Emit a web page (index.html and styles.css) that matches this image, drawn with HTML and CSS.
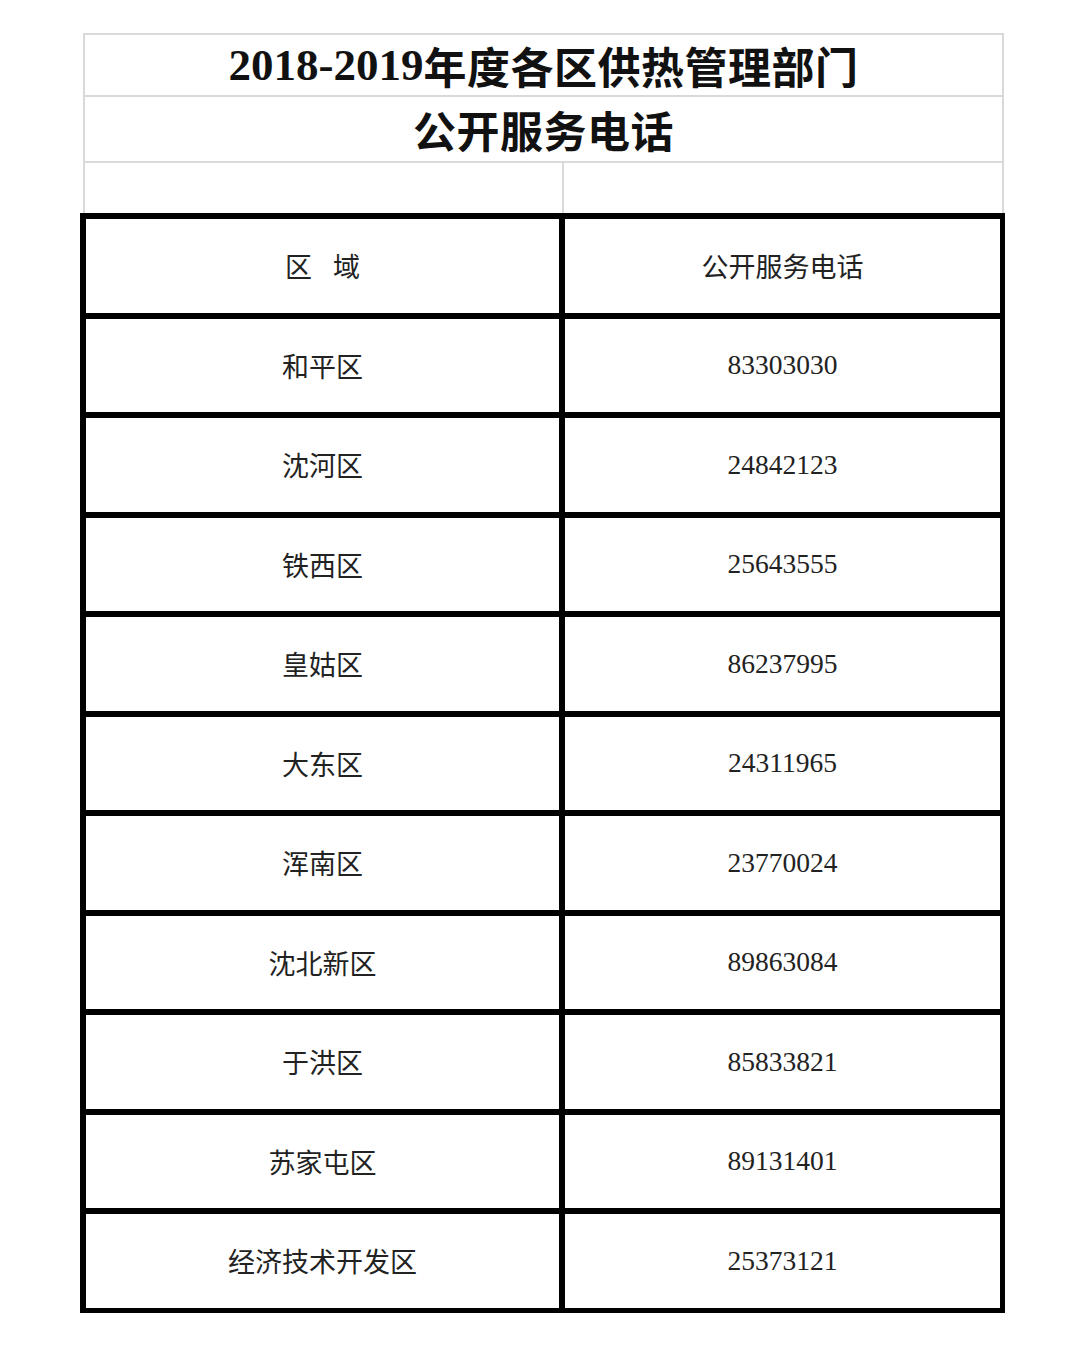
FILE: index.html
```html
<!DOCTYPE html>
<html lang="zh-CN">
<head>
<meta charset="utf-8">
<title>2018-2019年度各区供热管理部门公开服务电话</title>
<link rel="stylesheet" href="styles.css">
</head>
<body>
<div class="page">
  <div class="frame">
    <div class="title-row t1"><span class="num">2018-2019</span>年度各区供热管理部门</div>
    <div class="title-row t2">公开服务电话</div>
    <div class="blank-row"><div class="blank-cell"></div><div class="blank-cell"></div></div>
  </div>
  <div class="grid">
    <div class="cell split"><span>区</span><span>域</span></div><div class="cell">公开服务电话</div>
    <div class="cell">和平区</div><div class="cell tel">83303030</div>
    <div class="cell">沈河区</div><div class="cell tel">24842123</div>
    <div class="cell">铁西区</div><div class="cell tel">25643555</div>
    <div class="cell">皇姑区</div><div class="cell tel">86237995</div>
    <div class="cell">大东区</div><div class="cell tel">24311965</div>
    <div class="cell">浑南区</div><div class="cell tel">23770024</div>
    <div class="cell">沈北新区</div><div class="cell tel">89863084</div>
    <div class="cell">于洪区</div><div class="cell tel">85833821</div>
    <div class="cell">苏家屯区</div><div class="cell tel">89131401</div>
    <div class="cell">经济技术开发区</div><div class="cell tel">25373121</div>
  </div>
</div>
</body>
</html>
```
FILE: styles.css
```css
html, body {
  margin: 0;
  padding: 0;
  background: #ffffff;
}
.page {
  padding-top: 33px;
  font-family: "Noto Sans CJK SC", "Noto Sans", sans-serif;
  color: #1e1e1e;
}
.frame {
  margin-left: 83px;
  width: 921px;
  box-sizing: border-box;
  border: 2px solid #d9d9d9;
  border-bottom: none;
}
.title-row {
  display: flex;
  align-items: center;
  justify-content: center;
  box-sizing: border-box;
  border-bottom: 2px solid #d9d9d9;
  font-weight: 700;
  font-size: 43px;
  color: #111111;
  letter-spacing: 0.5px;
}
.t1 { height: 62px; }
.t2 { height: 66px; }
.num {
  font-family: "Liberation Serif", "Times New Roman", serif;
  font-weight: 700;
  font-size: 45px;
  letter-spacing: 0;
}
.blank-row {
  display: grid;
  grid-template-columns: 477px 1fr;
  height: 50px;
}
.blank-cell + .blank-cell {
  border-left: 2px solid #d9d9d9;
}
.grid {
  margin-left: 80px;
  width: 925px;
  box-sizing: border-box;
  background: #000000;
  padding: 6px 5px 5px 6px;
  display: grid;
  grid-template-columns: 473px 1fr;
  grid-auto-rows: 93.5px;
  gap: 6px;
}
.cell {
  background: #ffffff;
  display: flex;
  align-items: center;
  justify-content: center;
  font-size: 27px;
  color: #222222;
}
.split {
  gap: 21px;
}
.tel {
  font-family: "Liberation Serif", "Times New Roman", serif;
  font-size: 27.5px;
  color: #222222;
}
```
